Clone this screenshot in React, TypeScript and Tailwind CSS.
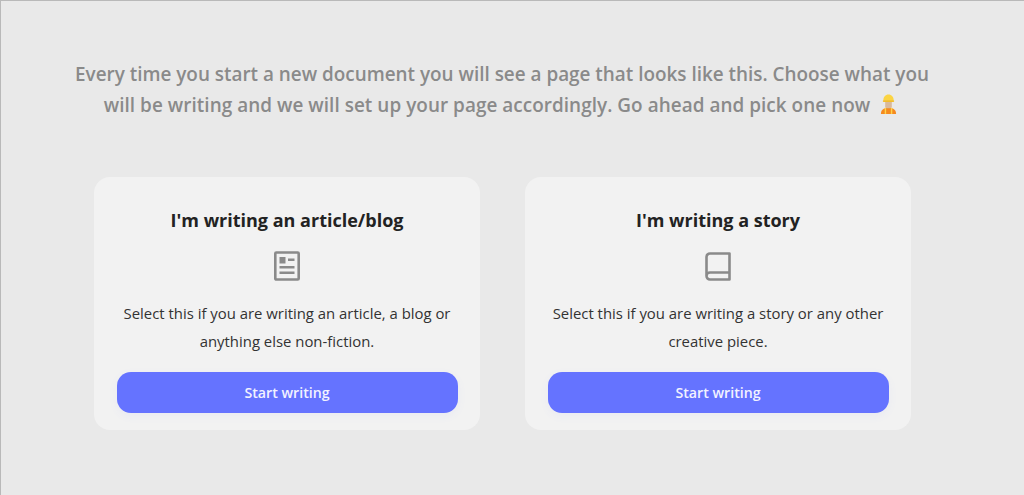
import type { ReactNode } from "react";

function WorkerEmoji() {
  return (
    <svg width="17" height="21" viewBox="0 0 18 22" className="mt-[4px] mr-[3px]" aria-hidden>
      <path d="M1 21c0-4 2.500-6.500 8-6.500s8 2.500 8 6.500z" fill="#f58a1f" />
      <rect x="5" y="14.500" width="1.500" height="6.500" fill="#ffd54a" />
      <rect x="11.500" y="14.500" width="1.500" height="6.500" fill="#ffd54a" />
      <rect x="5.500" y="7" width="7" height="8" rx="2" fill="#d9b99b" />
      <path d="M3.500 7c0-4 2.200-6.500 5.500-6.500s5.500 2.500 5.500 6.500z" fill="#fbd443" />
      <rect x="3" y="6.500" width="12" height="1.800" rx="0.900" fill="#f2bd2c" />
    </svg>
  );
}

function ArticleIcon() {
  return (
    <svg width="26" height="30" viewBox="0 0 26 30" fill="none" aria-hidden>
      <rect x="1.300" y="1.500" width="23.400" height="27" rx="1" stroke="#8a8a8a" strokeWidth="2.600" />
      <rect x="5.500" y="6" width="6" height="6.500" fill="#8a8a8a" />
      <rect x="14" y="7.500" width="6.500" height="2.500" fill="#8a8a8a" />
      <rect x="5.500" y="15" width="15" height="2.500" fill="#8a8a8a" />
      <rect x="5.500" y="20.500" width="15" height="2.500" fill="#8a8a8a" />
    </svg>
  );
}

function BookIcon() {
  return (
    <svg width="26" height="29" viewBox="0 0 26 29" fill="none" aria-hidden>
      <path
        d="M1.500 24V5a3.500 3.500 0 0 1 3.500-3.500h19.500v26H5a3.500 3.500 0 0 1-3.500-3.500zM1.500 24A3.500 3.500 0 0 1 5 20.500h19.500"
        stroke="#8a8a8a"
        strokeWidth="2.600"
        strokeLinejoin="round"
      />
    </svg>
  );
}

function ChoiceCard({ title, icon, children }: { title: string; icon: ReactNode; children: ReactNode }) {
  return (
    <div className="flex h-[253px] w-[386px] flex-col items-center rounded-[16px] bg-[#f2f2f2] pt-[30px] pr-[22px] pl-[23px]">
      <h2 className="text-[18px] leading-[26px] font-bold text-[#222222]">{title}</h2>
      <div className="mt-[18px] flex h-[30px] items-center justify-center">{icon}</div>
      <p className="mt-[18px] text-center text-[14.900px] leading-[28px] text-[#333333]">{children}</p>
      <button
        type="button"
        className="mt-[17px] h-[41px] w-full rounded-[14px] bg-[#6573ff] text-[14.200px] font-semibold text-[#f2f2ff] shadow-[0_3px_10px_rgba(101,115,255,0.06)]"
      >
        Start writing
      </button>
    </div>
  );
}

export default function App() {
  return (
    <div className="h-[495px] w-[1024px] overflow-hidden border-t border-l border-[#b9b9b9] bg-[#e9e9e9] pt-[58px] pr-[21px] font-['Open_Sans',sans-serif]">
      <div className="flex flex-col items-center text-[18.900px] leading-[31px] font-semibold text-[#8a8a8a]">
        <p>Every time you start a new document you will see a page that looks like this. Choose what you</p>
        <p className="flex items-start gap-[10px]">
          <span className="tracking-[0.05px]">
            will be writing and we will set up your page accordingly. Go ahead and pick one now
          </span>
          <WorkerEmoji />
        </p>
      </div>
      <div className="mt-[56px] flex justify-center gap-[45px]">
        <ChoiceCard title="I'm writing an article/blog" icon={<ArticleIcon />}>
          Select this if you are writing an article, a blog or
          <br />
          anything else non-fiction.
        </ChoiceCard>
        <ChoiceCard title="I'm writing a story" icon={<BookIcon />}>
          Select this if you are writing a story or any other
          <br />
          creative piece.
        </ChoiceCard>
      </div>
    </div>
  );
}
